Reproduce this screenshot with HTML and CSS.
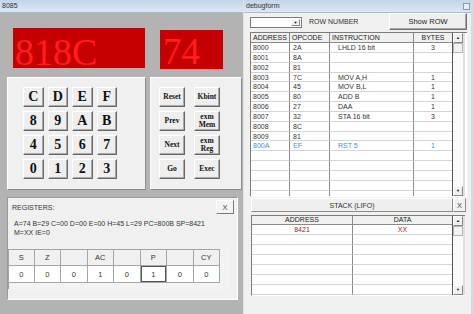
FILE: index.html
```html
<!DOCTYPE html>
<html>
<head>
<meta charset="utf-8">
<link rel="stylesheet" href="styles.css">
</head>
<body>
<div class="screen">
  <section class="win-main">
    <header class="titlebar">8085</header>
    <div class="displays">
      <div class="led led-addr">818C</div>
      <div class="led led-data">74</div>
    </div>
    <div class="pads">
      <div class="panel keypad">
        <span class="key">C</span><span class="key">D</span><span class="key">E</span><span class="key">F</span>
        <span class="key">8</span><span class="key">9</span><span class="key">A</span><span class="key">B</span>
        <span class="key">4</span><span class="key">5</span><span class="key">6</span><span class="key">7</span>
        <span class="key">0</span><span class="key">1</span><span class="key">2</span><span class="key">3</span>
      </div>
      <div class="panel fnpad">
        <span class="fn">Reset</span><span class="fn">Kbint</span>
        <span class="fn">Prev</span><span class="fn">exm<br>Mem</span>
        <span class="fn">Next</span><span class="fn">exm<br>Reg</span>
        <span class="fn">Go</span><span class="fn">Exec</span>
      </div>
    </div>
    <div class="regs">
      <div class="regs-head"><span>REGISTERS:</span><span class="xbtn">X</span></div>
      <p class="regs-line">A=74 B=29 C=00 D=00 E=00 H=45 L=29 PC=800B SP=8421<br>M=XX IE=0</p>
      <div class="flags">
        <div class="flag-row flag-head">
          <span>S</span><span>Z</span><span></span><span>AC</span><span></span><span>P</span><span></span><span>CY</span>
        </div>
        <div class="flag-row flag-vals">
          <span>0</span><span>0</span><span>0</span><span>1</span><span>0</span><span class="focus">1</span><span>0</span><span>0</span>
        </div>
      </div>
    </div>
  </section>

  <section class="win-debug">
    <header class="titlebar dbg-title"><span>debugform</span><span class="tclose"></span></header>
    <div class="tools">
      <div class="combo"><span class="combo-arrow">▼</span></div>
      <span class="rowlabel">ROW NUMBER</span>
      <span class="showrow">Show ROW</span>
    </div>
    <div class="grid">
      <div class="rows">
        <div class="row head"><span>ADDRESS</span><span>OPCODE</span><span>INSTRUCTION</span><span class="c">BYTES</span></div>
        <div class="row"><span>8000</span><span class="op">2A</span><span class="ins">LHLD 16 bit</span><span class="c">3</span></div>
        <div class="row"><span>8001</span><span class="op">8A</span><span class="ins"></span><span class="c"></span></div>
        <div class="row"><span>8002</span><span class="op">81</span><span class="ins"></span><span class="c"></span></div>
        <div class="row"><span>8003</span><span class="op">7C</span><span class="ins">MOV A,H</span><span class="c">1</span></div>
        <div class="row"><span>8004</span><span class="op">45</span><span class="ins">MOV B,L</span><span class="c">1</span></div>
        <div class="row"><span>8005</span><span class="op">80</span><span class="ins">ADD B</span><span class="c">1</span></div>
        <div class="row"><span>8006</span><span class="op">27</span><span class="ins">DAA</span><span class="c">1</span></div>
        <div class="row"><span>8007</span><span class="op">32</span><span class="ins">STA 16 bit</span><span class="c">3</span></div>
        <div class="row"><span>8008</span><span class="op">8C</span><span class="ins"></span><span class="c"></span></div>
        <div class="row"><span>8009</span><span class="op">81</span><span class="ins"></span><span class="c"></span></div>
        <div class="row sel"><span>800A</span><span class="op">EF</span><span class="ins">RST 5</span><span class="c">1</span></div>
        <div class="row"><span></span><span></span><span></span><span></span></div>
        <div class="row"><span></span><span></span><span></span><span></span></div>
        <div class="row"><span></span><span></span><span></span><span></span></div>
        <div class="row"><span></span><span></span><span></span><span></span></div>
        <div class="row"><span></span><span></span><span></span><span></span></div>
      </div>
      <div class="scroll">
        <span class="sb-btn">▲</span>
        <span class="sb-thumb"></span>
        <span class="sb-track"></span>
        <span class="sb-btn">▼</span>
      </div>
    </div>
    <div class="stack-head"><span class="stack-bar">STACK (LIFO)</span><span class="stack-x">X</span></div>
    <div class="grid stack-grid">
      <div class="rows">
        <div class="srow head"><span>ADDRESS</span><span>DATA</span></div>
        <div class="srow data"><span>8421</span><span>XX</span></div>
        <div class="srow"><span></span><span></span></div>
        <div class="srow"><span></span><span></span></div>
        <div class="srow"><span></span><span></span></div>
        <div class="srow"><span></span><span></span></div>
        <div class="srow"><span></span><span></span></div>
        <div class="srow"><span></span><span></span></div>
      </div>
      <div class="scroll">
        <span class="sb-btn">▲</span>
        <span class="sb-thumb"></span>
        <span class="sb-track"></span>
        <span class="sb-btn">▼</span>
      </div>
    </div>
    <div class="bottom"></div>
  </section>
</div>
</body>
</html>
```
FILE: styles.css
```css
* { box-sizing: border-box; margin: 0; padding: 0; }
html, body { width: 474px; height: 314px; overflow: hidden; }
body { font-family: "Liberation Sans", Arial, sans-serif; font-size: 7px; color: #222; background: #b2b2b2; }

.screen { display: flex; height: 314px; }

/* ---------- left window ---------- */
.win-main { width: 246px; background: #b3b3b3; border-right: 1px solid #e2e2e2; display: flex; flex-direction: column; }
.titlebar { height: 13px; flex: none; background: linear-gradient(#c3d5e9, #dce7f3); border-bottom: 1px solid #a9bccf; font-size: 7px; line-height: 12px; padding-left: 2px; color: #333; }

.displays { display: flex; align-items: flex-start; margin-top: 15px; padding-left: 13px; }
.led { background: #c60000; color: #ff1e1e; font-family: "Liberation Serif", "Times New Roman", serif; font-size: 38px; line-height: 30px; }
.led-addr { width: 132px; height: 40px; padding: 9px 0 0 2px; }
.led-data { width: 63px; height: 39px; margin: 2px 0 0 15px; padding: 7px 0 0 3px; font-size: 37px; }

.pads { display: flex; gap: 4px; margin-top: 8px; padding-left: 7px; height: 113px; }
.panel { background: #f0f0f0; border: 1px solid; border-color: #ffffff #8c8c8c #8c8c8c #ffffff; }
.keypad { width: 139px; display: grid; grid-template-columns: repeat(4, 20.5px); grid-auto-rows: 20px; gap: 4px; padding: 9px 0 0 15px; align-content: start; }
.fnpad { width: 92px; display: grid; grid-template-columns: repeat(2, 26px); grid-auto-rows: 20px; gap: 4px 9px; padding: 9px 0 0 8px; align-content: start; }

.key, .fn { background: #eeeeee; border: 1px solid; border-color: #ffffff #686868 #686868 #ffffff; box-shadow: inset -1px -1px #a9a9a9; display: flex; align-items: center; justify-content: center; color: #111; font-family: "Liberation Serif", "Times New Roman", serif; font-weight: bold; }
.key { font-size: 14px; }
.fn { font-size: 7.5px; line-height: 8px; text-align: center; }

.regs { margin: 7px 5px 0 7px; height: 103px; background: #f0f0f0; border: 1px solid; border-color: #9a9a9a #ffffff #ffffff #9a9a9a; padding: 2px 3px 0 4px; }
.regs-head { display: flex; justify-content: space-between; align-items: center; height: 14px; font-size: 7px; color: #333; }
.xbtn { width: 18px; height: 14px; background: #f4f4f4; border: 1px solid; border-color: #ffffff #7a7a7a #7a7a7a #ffffff; font-size: 7.5px; display: flex; align-items: center; justify-content: center; color: #444; }
.regs-line { margin: 5px 0 0 2px; line-height: 9px; font-size: 7px; color: #333; }

.flags { margin: 12px 0 0 -4px; width: 222px; height: 40px; background: #f3f3f3; box-shadow: inset 1px 0 #9a9a9a; }
.flag-row { display: grid; grid-template-columns: repeat(8, 26.5px); height: 17px; width: 213px; }
.flag-row span { display: flex; align-items: center; justify-content: center; border-right: 1px solid #a5a5a5; border-bottom: 1px solid #a5a5a5; font-size: 7.5px; color: #333; }
.flag-head span { background: #f0f0f0; border-top: 1px solid #a5a5a5; }
.flag-row span:first-child { border-left: 1px solid #a5a5a5; }
.flag-vals span { background: #ffffff; }
.flag-vals .focus { box-shadow: inset 0 0 0 1px #555; }

/* ---------- right window ---------- */
.win-debug { flex: 1; background: #f0f0f0; display: flex; flex-direction: column; border-right: 3px solid #d2dbe5; }
.dbg-title { display: flex; justify-content: space-between; align-items: flex-start; padding-right: 1px; }
.tclose { width: 7px; height: 7px; margin-top: 3px; border: 1px solid #8a9aaa; background: #e6edf5; }

.tools { display: flex; align-items: flex-start; height: 17px; padding: 0 4px 0 6px; }
.combo { margin-top: 4px; width: 52px; height: 11px; background: #fff; border: 1px solid #7a7a7a; display: flex; justify-content: flex-end; padding: 1px; }
.combo-arrow { width: 9px; height: 7px; background: #f0f0f0; border: 1px solid; border-color: #fff #888 #888 #fff; font-size: 4px; line-height: 5px; text-align: center; color: #111; }
.rowlabel { margin: 3.5px 0 0 7px; line-height: 10px; font-size: 7px; color: #333; }
.showrow { margin-left: auto; width: 78px; height: 17px; background: #efefef; border: 1px solid; border-color: #ffffff #707070 #707070 #ffffff; box-shadow: inset -1px -1px #aaa; font-size: 7.5px; display: flex; align-items: center; justify-content: center; color: #222; }

.grid { margin: 2px 4px 0 6px; height: 165px; border: 1px solid; border-color: #7c7c7c #ffffff #ffffff #7c7c7c; border-right: none; display: flex; background: #fff; overflow: hidden; }
.rows { border-right: 1px solid #555; }
.row { display: grid; grid-template-columns: 39px 40px 84px 38px; height: 9.85px; }
.row span, .srow span { border-right: 1px solid #8a8a8a; border-bottom: 1px solid #d5d5d5; font-size: 7px; line-height: 9px; padding-left: 2px; white-space: nowrap; overflow: hidden; color: #333; }
.row span:last-child, .srow span:last-child { border-right: none; }
.row.head { height: 10px; }
.row.head span, .srow.head span { background: #f0f0f0; border-bottom-color: #8a8a8a; border-right-color: #8a8a8a; color: #222; }
.row .op { padding-left: 3px; }
.row .ins { padding-left: 8px; }
.row .c, .srow span { text-align: center; padding-left: 0; }
.row.sel span { color: #4b8fd0; }

.scroll { width: 12px; display: flex; flex-direction: column; background: #fafafa; border-right: 2px solid #e0e0e0; }
.sb-btn { height: 10px; flex: none; background: #f0f0f0; border: 1px solid; border-color: #fff #888 #888 #fff; font-size: 4px; line-height: 8px; text-align: center; color: #111; }
.sb-thumb { height: 10px; flex: none; background: #f2f2f2; border: 1px solid #b5b5b5; }
.sb-track { flex: 1; }

.stack-head { display: flex; margin: 1px 5px 0 7px; height: 14px; }
.stack-bar { flex: 1; background: #efefef; border: 1px solid; border-color: #ffffff #8a8a8a #8a8a8a #ffffff; font-size: 7px; display: flex; align-items: center; justify-content: center; color: #333; }
.stack-x { width: 13px; background: #f2f2f2; border: 1px solid; border-color: #ffffff #8a8a8a #8a8a8a #ffffff; font-size: 7.5px; display: flex; align-items: center; justify-content: center; color: #444; }

.stack-grid { margin: 3px 6px 0 7px; height: 81px; }
.srow { display: grid; grid-template-columns: 101px 99px; height: 10px; }
.srow.head { height: 9px; }
.srow.head span { line-height: 8px; }
.srow.data span { color: #8c1f1f; }

.bottom { flex: 1; background: #f0f0f0; }
```
